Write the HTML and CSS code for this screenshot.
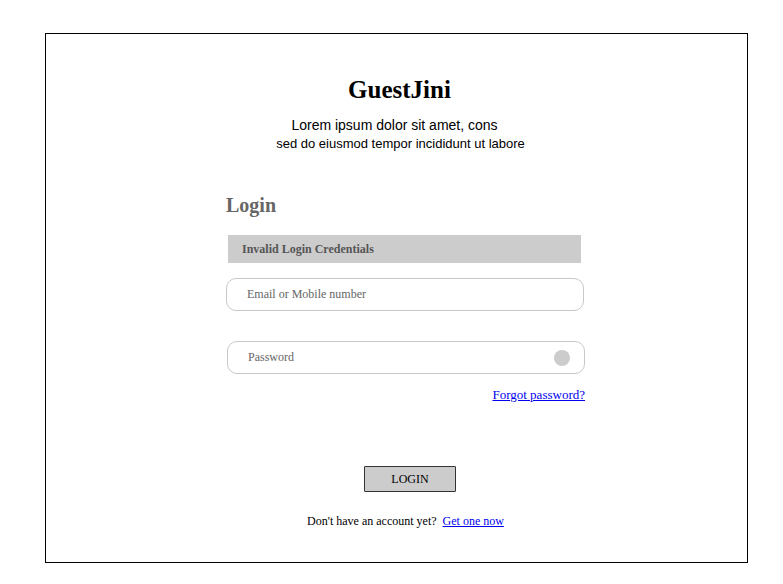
FILE: index.html
```html
<!DOCTYPE html>
<html>
<head>
<meta charset="utf-8">
<link rel="stylesheet" href="styles.css">
</head>
<body>
<div class="frame">
  <header class="head">
    <h1 class="title">GuestJini</h1>
    <p class="sub1">Lorem ipsum dolor sit amet, cons</p>
    <p class="sub2">sed do eiusmod tempor incididunt ut labore</p>
  </header>
  <main class="col">
    <h2 class="login-h">Login</h2>
    <div class="error">Invalid Login Credentials</div>
    <div class="field">Email or Mobile number</div>
    <div class="field pw"><span>Password</span><span class="dot"></span></div>
    <div class="forgot"><a href="#">Forgot password?</a></div>
    <div class="btn-row"><button class="btn">LOGIN</button></div>
    <p class="signup">Don't have an account yet?&nbsp;&nbsp;<a href="#">Get one now</a></p>
  </main>
</div>
</body>
</html>
```

FILE: styles.css
```css
* { box-sizing: border-box; }
body {
  margin: 0;
  background: #fff;
  font-family: "Liberation Serif", serif;
  color: #000;
}
.frame {
  margin: 33px 0 0 45px;
  width: 703px;
  height: 530px;
  border: 1px solid #000;
  padding-top: 40px;
}
.head { text-align: center; padding-left: 6px; }
.title {
  margin: 0;
  font-size: 25px;
  line-height: 32px;
  font-weight: bold;
}
.sub1 {
  margin: 10px 0 0;
  font-family: "Liberation Sans", sans-serif;
  font-size: 14px;
  line-height: 18px;
  padding-right: 10px;
}
.sub2 {
  margin: 2px 0 0;
  font-family: "Liberation Sans", sans-serif;
  font-size: 13px;
  line-height: 16px;
  padding-left: 2px;
}
.col {
  margin: 41px 0 0 180px;
  width: 359px;
  display: flex;
  flex-direction: column;
}
.login-h {
  margin: 0;
  font-size: 20px;
  line-height: 24px;
  color: #666;
  font-weight: bold;
}
.error {
  margin: 18px 4px 0 2px;
  height: 28px;
  background: #ccc;
  color: #555;
  font-size: 12px;
  font-weight: bold;
  padding-left: 14px;
  display: flex;
  align-items: center;
}
.field {
  margin-top: 15px;
  height: 33px;
  border: 1px solid #c8c8c8;
  border-radius: 10px;
  padding: 0 14px 0 20px;
  display: flex;
  align-items: center;
  justify-content: space-between;
  font-size: 12px;
  color: #666;
  margin-right: 1px;
}
.field.pw { margin-top: 30px; margin-left: 1px; margin-right: 0; }
.dot {
  width: 16px;
  height: 16px;
  border-radius: 50%;
  background: #ccc;
}
.forgot {
  margin-top: 13px;
  text-align: right;
  font-size: 13px;
  line-height: 16px;
}
.forgot a, .signup a { color: #00e; }
.btn-row {
  margin-top: 63px;
  display: flex;
  justify-content: center;
  padding-left: 9px;
}
.btn {
  width: 92px;
  height: 26px;
  background: #ccc;
  border: 1px solid #333;
  border-radius: 1px;
  font-family: "Liberation Serif", serif;
  font-size: 12px;
  color: #000;
  padding: 0;
}
.signup {
  margin: 22px 0 0;
  text-align: center;
  font-size: 12px;
  line-height: 15px;
}
```
